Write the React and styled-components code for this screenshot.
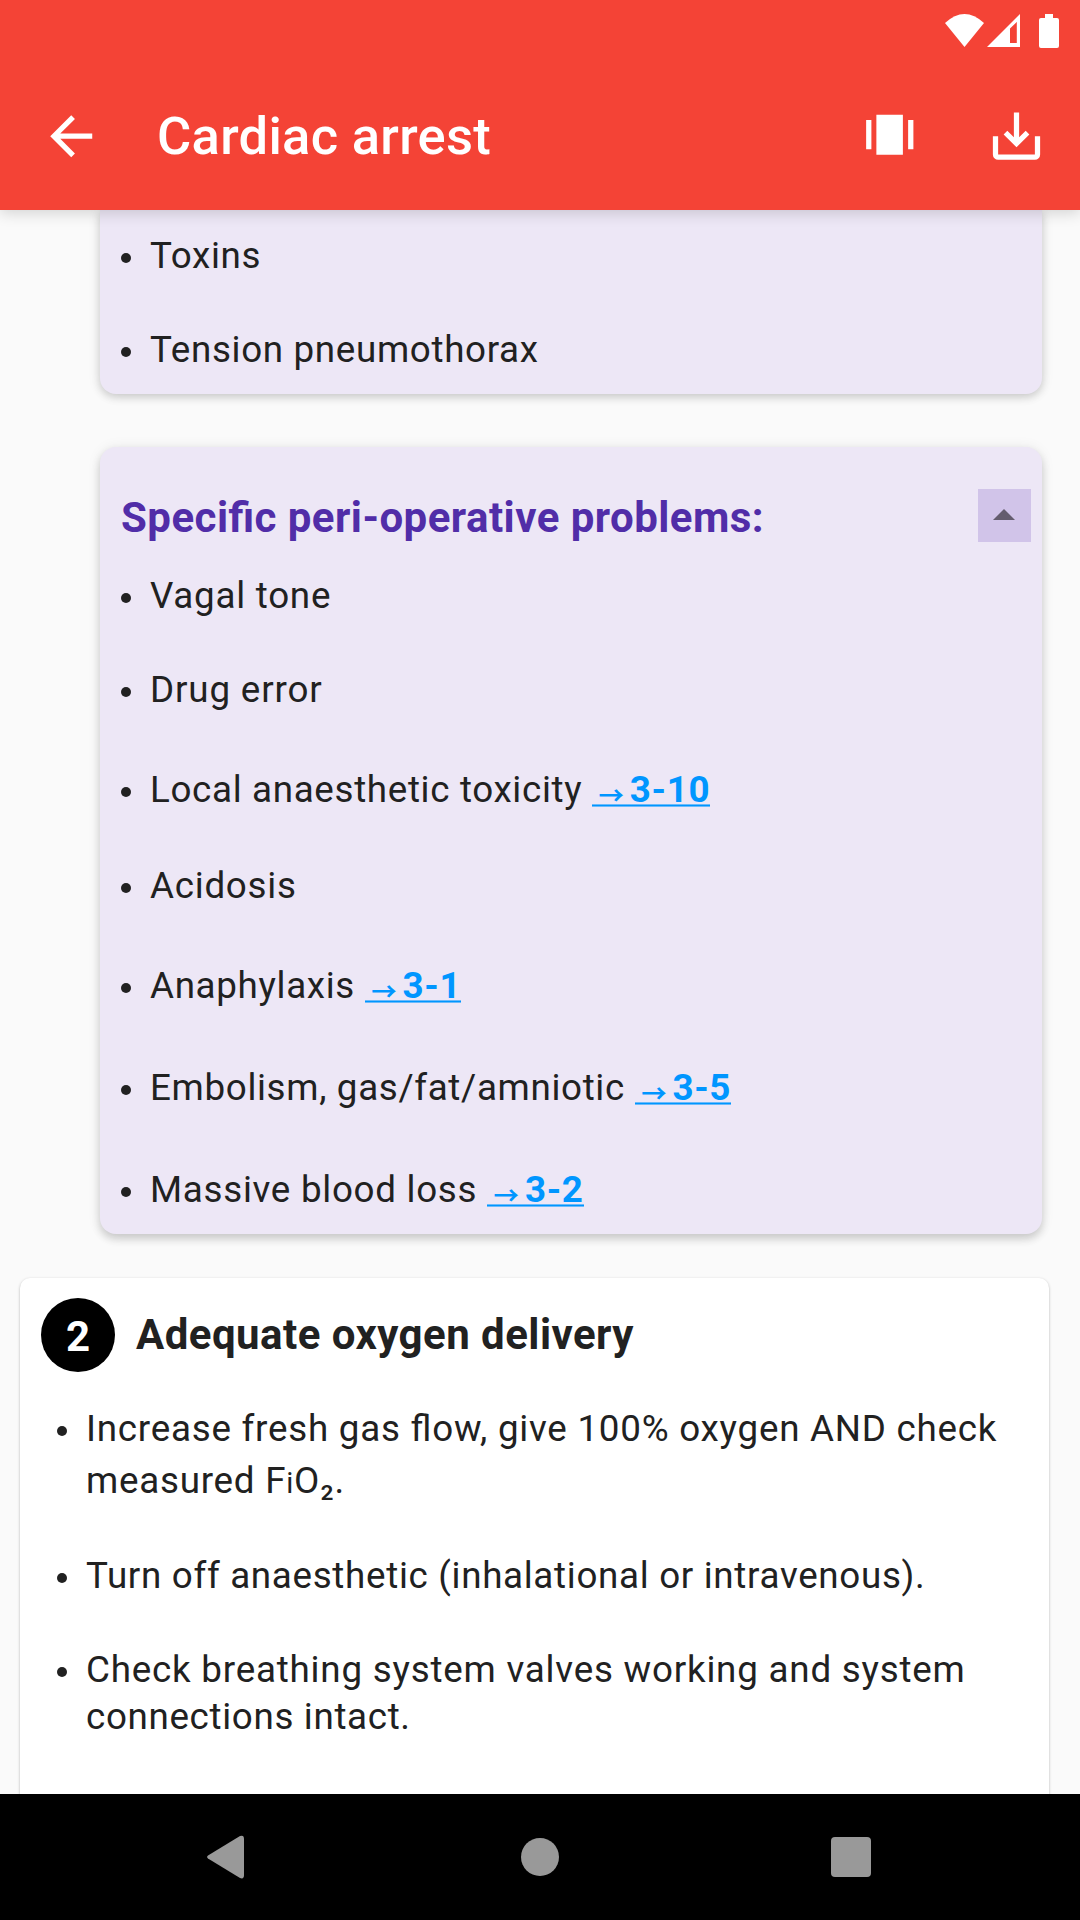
import React from 'react';
import styled, { createGlobalStyle } from 'styled-components';

const GlobalStyle = createGlobalStyle`
  * { box-sizing: border-box; }
  body {
    margin: 0;
    background: #fafafa;
    font-family: Roboto, "Liberation Sans", sans-serif;
    font-feature-settings: "liga" 1;
  }
`;

const Screen = styled.div`
  display: flex;
  flex-direction: column;
  width: 1080px;
  height: 1920px;
  overflow: hidden;
  background: #fafafa;
  color: #212121;
`;

const Header = styled.header`
  position: relative;
  z-index: 1;
  flex: none;
  height: 210px;
  background: #f44336;
  color: #fff;
  box-shadow: 0 3px 14px rgba(0, 0, 0, 0.16);
`;

const StatusBar = styled.div`
  display: flex;
  justify-content: flex-end;
  height: 63px;
  padding: 14px 21px 0 0;
`;

const StatusIcon = styled.svg`
  flex: none;
  margin-left: ${(p) => p.$gap || 0}px;
  fill: #fff;
`;

const Toolbar = styled.div`
  display: flex;
  align-items: center;
  height: 147px;
  padding: 0 32px 1px 40px;
`;

const ToolIcon = styled.svg`
  flex: none;
  display: block;
  width: 63px;
  height: 63px;
  fill: #fff;
  margin-left: ${(p) => p.$gap || 0}px;
`;

const Title = styled.h1`
  flex: 1;
  margin: 0 0 1px 54px;
  font-size: 52.5px;
  font-weight: 500;
  line-height: 62px;
  letter-spacing: 0.3px;
`;

const Content = styled.main`
  flex: 1;
  min-height: 0;
  overflow: hidden;
`;

const Causes = styled.div`
  display: flex;
  flex-direction: column;
  gap: 53px;
  padding: 0 38px 0 100px;
`;

const CauseCard = styled.section`
  padding: ${(p) => p.$padding};
  background: #ede7f6;
  border-radius: ${(p) => (p.$continued ? '0 0 16px 16px' : '16px')};
  box-shadow: 0 ${(p) => (p.$continued ? 3 : 5)}px 8px rgba(0, 0, 0, 0.16), 0 1px 14px rgba(0, 0, 0, 0.08);
`;

const CauseHeading = styled.div`
  display: flex;
  justify-content: space-between;
  height: 53px;
`;

const CauseTitle = styled.h2`
  margin: 0;
  padding-top: 2px;
  font-size: 42px;
  line-height: 53px;
  font-weight: 700;
  letter-spacing: 0.46px;
  color: #512da8;
`;

const CollapseButton = styled.button`
  display: grid;
  place-items: center;
  width: 53px;
  height: 53px;
  padding: 0 1px 2px 0;
  border: 0;
  background: #d1c4e9;
`;

const List = styled.ul`
  display: flex;
  flex-direction: column;
  gap: 47px;
  margin: ${(p) => p.$top}px 0 0;
  padding: 0;
  list-style: none;
`;

const Item = styled.li`
  display: flex;
  gap: 19px;
  padding: ${(p) => (p.$linked ? '6px 0 2px' : '0')};
  font-size: 36.75px;
  line-height: 47px;

  &::before {
    content: "";
    flex: none;
    width: 10px;
    height: 10px;
    margin-top: 21px;
    border-radius: 50%;
    background: #212121;
  }
`;

const Line = styled.span`
  display: block;
  white-space: nowrap;
  padding: ${(p) => p.$pad || 0};
  letter-spacing: ${(p) => p.$track || 0.67}px;
`;

const SmallI = styled.span`
  font-size: 29px;
  line-height: 1;
`;

const Reference = styled.a`
  display: inline-block;
  color: #0096ff;
  font-weight: 700;
  letter-spacing: 0.656px;
  background: linear-gradient(
      rgba(0, 150, 255, 0.55) 1px,
      #0096ff 1px,
      #0096ff 2px,
      rgba(0, 150, 255, 0.55) 2px
    )
    0 38px / 100% 3px no-repeat;
`;

const Arrow = styled.span`
  display: inline-block;
  width: 37.8px;
  padding-left: 6.5px;
  vertical-align: -3px;
  font-family: "Noto Sans CJK JP", sans-serif;
  font-size: 25.5px;
  line-height: 27px;
`;

const StepCard = styled.section`
  height: 560px;
  margin: 44px 31px 0 20px;
  padding: 20px 21px 0;
  background: #fff;
  border-radius: 10px;
  box-shadow: 0 1px 3px rgba(0, 0, 0, 0.28);
`;

const StepHeading = styled.div`
  display: flex;
  align-items: center;
  gap: 21px;
`;

const StepNumber = styled.span`
  display: grid;
  place-items: center;
  width: 74px;
  height: 74px;
  padding-top: 2px;
  border-radius: 50%;
  background: #000;
  color: #fff;
  font-size: 42px;
  font-weight: 700;
`;

const StepTitle = styled.h2`
  margin: 0;
  font-size: 42px;
  font-weight: 700;
  line-height: 50px;
  letter-spacing: 0.46px;
`;

const StepBody = styled.div`
  padding-left: 16px;
`;

const NavBar = styled.nav`
  position: relative;
  z-index: 1;
  flex: none;
  display: flex;
  align-items: center;
  height: 126px;
  padding-left: 207px;
  background: #000;
`;

const NavIcon = styled.svg`
  display: block;
  flex: none;
  fill: #999;
  margin-left: ${(p) => p.$gap || 0}px;
`;

const problems = [
  { text: 'Vagal tone', track: 0.75 },
  { text: 'Drug error', track: 0.85 },
  { text: 'Local anaesthetic toxicity', link: '3-10' },
  { text: 'Acidosis', track: 0.75 },
  { text: 'Anaphylaxis', link: '3-1' },
  { text: 'Embolism, gas/fat/amniotic', link: '3-5' },
  { text: 'Massive blood loss', link: '3-2', track: 0.72 },
];

export default function App() {
  return (
    <>
      <GlobalStyle />
      <Screen>
        <Header>
          <StatusBar>
            <StatusIcon width="39" height="33" viewBox="0 0 39 33">
              <path d="M0 9 Q19.5 -9 39 9 L19.5 33z" />
            </StatusIcon>
            <StatusIcon $gap={3} width="33" height="33" viewBox="0 0 33 33">
              <path fillRule="evenodd" d="M33 0v33H0zM29.800 8L23 14.500V29h6.800z" />
            </StatusIcon>
            <StatusIcon $gap={19} width="20" height="34" viewBox="0 0 20 34">
              <path d="M6 0h8v4h4a2 2 0 0 1 2 2v26a2 2 0 0 1-2 2H2a2 2 0 0 1-2-2V6a2 2 0 0 1 2-2h4z" />
            </StatusIcon>
          </StatusBar>
          <Toolbar>
            <ToolIcon viewBox="0.1 0.1 24 24">
              <path d="M20 11H7.83l5.59-5.59L12 4l-8 8 8 8 1.41-1.41L7.83 13H20v-2z" />
            </ToolIcon>
            <Title>Cardiac arrest</Title>
            <ToolIcon viewBox="0 0 24 24">
              <path d="M7 3.75h10.100v15.200H7zM3.100 5.750h2v11.100h-2zM19.100 5.750h2v11.100h-2z" />
            </ToolIcon>
            <ToolIcon $gap={64} viewBox="0 0.1 24 24">
              <path d="M3 12h2v7h14v-7h2v7a2 2 0 0 1-2 2H5a2 2 0 0 1-2-2z" />
              <path d="M12 16.200l4.900-4.900-1.400-1.400-2.500 2.500V3h-2v9.400L8.500 9.900l-1.400 1.400z" />
            </ToolIcon>
          </Toolbar>
        </Header>

        <Content>
          <Causes>
            <CauseCard $continued $padding="22px 11px 21px 21px">
              <List $top={0}>
                <Item><Line>Toxins</Line></Item>
                <Item><Line>Tension pneumothorax</Line></Item>
              </List>
            </CauseCard>

            <CauseCard $padding="42px 11px 19px 21px">
              <CauseHeading>
                <CauseTitle>Specific peri-operative problems:</CauseTitle>
                <CollapseButton aria-label="Collapse">
                  <svg width="22" height="11" viewBox="0 0 22 11">
                    <path d="M0 11L11 0l11 11z" fill="#645c6e" />
                  </svg>
                </CollapseButton>
              </CauseHeading>
              <List $top={30}>
                {problems.map((p) => (
                  <Item key={p.text} $linked={!!p.link}>
                    <Line $track={p.track}>
                      {p.text}
                      {p.link && <> <Reference><Arrow>→</Arrow>{p.link}</Reference></>}
                    </Line>
                  </Item>
                ))}
              </List>
            </CauseCard>
          </Causes>

          <StepCard>
            <StepHeading>
              <StepNumber>2</StepNumber>
              <StepTitle>Adequate oxygen delivery</StepTitle>
            </StepHeading>
            <StepBody>
              <List $top={33}>
                <Item>
                  <span>
                    <Line $track={0.76}>Increase fresh gas flow, give 100% oxygen AND check</Line>
                    <Line $track={0.76} $pad="5px 0 1px">measured F<SmallI>i</SmallI>O₂.</Line>
                  </span>
                </Item>
                <Item><Line $track={0.69}>Turn off anaesthetic (inhalational or intravenous).</Line></Item>
                <Item>
                  <span>
                    <Line $track={0.79}>Check breathing system valves working and system</Line>
                    <Line>connections intact.</Line>
                  </span>
                </Item>
              </List>
            </StepBody>
          </StepCard>
        </Content>

        <NavBar>
          <NavIcon width="37" height="44" viewBox="0 0 37 44">
            <path d="M1 20.500Q-.8 22 1 23.500L33 43Q37 44.500 37 40V4Q37-.5 33 1z" />
          </NavIcon>
          <NavIcon $gap={277} width="38" height="38" viewBox="0 0 38 38"><circle cx="19" cy="19" r="19" /></NavIcon>
          <NavIcon $gap={272} width="40" height="40" viewBox="0 0 40 40"><rect width="40" height="40" rx="4" /></NavIcon>
        </NavBar>
      </Screen>
    </>
  );
}
